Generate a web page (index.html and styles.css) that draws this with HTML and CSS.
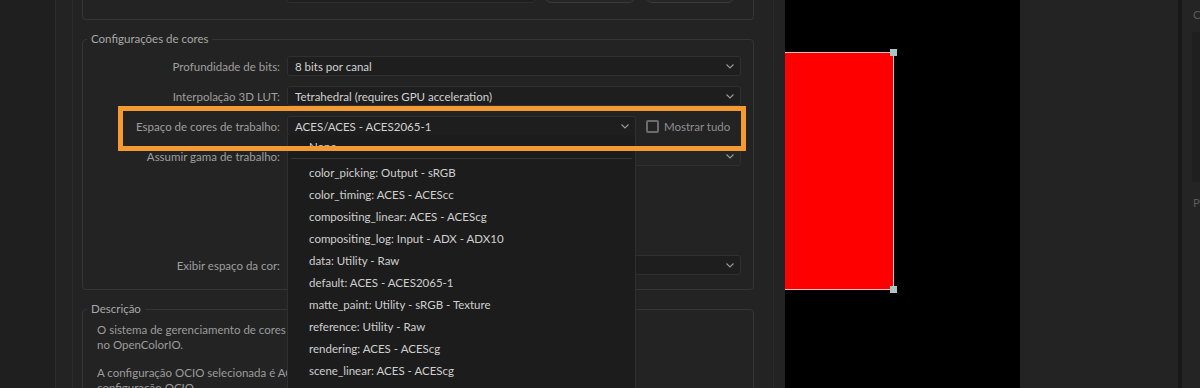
FILE: index.html
```html
<!DOCTYPE html>
<html lang="pt">
<head>
<meta charset="utf-8">
<link rel="stylesheet" href="styles.css">
</head>
<body>
<div class="app">
  <div class="gutter"></div>
  <div class="dialog">
    <div class="pane">
      <div class="top-box">
        <div class="top-row">
          <span class="label top-label">Configuração personalizada:</span>
          <span class="field top-field"></span>
          <span class="btn">Carregar</span>
          <span class="btn">Configuração</span>
        </div>
      </div>

      <fieldset class="group">
        <legend>Configurações de cores</legend>
        <div class="form">
          <span class="label">Profundidade de bits:</span>
          <div class="select"><span>8 bits por canal</span><svg class="chev" viewBox="0 0 8 5"><path d="M0.5 0.5 L4 4 L7.5 0.5"/></svg></div>

          <span class="label">Interpolação 3D LUT:</span>
          <div class="select"><span>Tetrahedral (requires GPU acceleration)</span><svg class="chev" viewBox="0 0 8 5"><path d="M0.5 0.5 L4 4 L7.5 0.5"/></svg></div>

          <span class="label">Espaço de cores de trabalho:</span>
          <div class="field-wrap">
            <div class="select"><span>ACES/ACES - ACES2065-1</span><svg class="chev" viewBox="0 0 8 5"><path d="M0.5 0.5 L4 4 L7.5 0.5"/></svg></div>
            <label class="check"><span class="box"></span>Mostrar tudo</label>
          </div>

          <span class="label">Assumir gama de trabalho:</span>
          <div class="select disabled"><span></span><svg class="chev" viewBox="0 0 8 5"><path d="M0.5 0.5 L4 4 L7.5 0.5"/></svg></div>

          <span class="label spaced">Exibir espaço da cor:</span>
          <div class="select spaced"><span></span><svg class="chev" viewBox="0 0 8 5"><path d="M0.5 0.5 L4 4 L7.5 0.5"/></svg></div>
        </div>
      </fieldset>

      <fieldset class="group desc">
        <legend>Descrição</legend>
        <p>O sistema de gerenciamento de cores OCIO é baseado<br>no OpenColorIO.</p>
        <p>A configuração OCIO selecionada é ACES 1.2. Para mais<br>configuração OCIO.</p>
      </fieldset>
    </div>
  </div>

  <div class="canvas">
    <div class="layer">
      <span class="handle h-top"></span>
      <span class="handle h-bottom"></span>
    </div>
  </div>
  <div class="panel"></div>
  <div class="divider"></div>
  <div class="panel2">
    <span class="p2-letter">C</span>
    <div class="p2-box"></div>
    <span class="p2-letter">P</span>
  </div>

  <div class="dropdown">
    <div class="dd-item dd-none">None</div>
    <div class="dd-sep"></div>
    <div class="dd-item">color_picking: Output - sRGB</div>
    <div class="dd-item">color_timing: ACES - ACEScc</div>
    <div class="dd-item">compositing_linear: ACES - ACEScg</div>
    <div class="dd-item">compositing_log: Input - ADX - ADX10</div>
    <div class="dd-item">data: Utility - Raw</div>
    <div class="dd-item">default: ACES - ACES2065-1</div>
    <div class="dd-item">matte_paint: Utility - sRGB - Texture</div>
    <div class="dd-item">reference: Utility - Raw</div>
    <div class="dd-item">rendering: ACES - ACEScg</div>
    <div class="dd-item">scene_linear: ACES - ACEScg</div>
  </div>

  <div class="highlight"></div>
</div>
</body>
</html>
```

FILE: styles.css
```css
* { box-sizing: border-box; }

html, body {
  margin: 0;
  padding: 0;
  background: #1e1e1e;
}

body {
  width: 1200px;
  height: 388px;
  overflow: hidden;
  font-family: "Lato", "Liberation Sans", sans-serif;
  font-size: 11.5px;
  color: #a6a6a6;
}

.app {
  position: relative;
  display: flex;
  width: 1200px;
  height: 388px;
  overflow: hidden;
}

.gutter {
  width: 55px;
  flex: none;
  background: #1f1f1f;
}

.dialog {
  width: 730px;
  flex: none;
  background: #232323;
  border-left: 1px solid #2d2d2d;
  padding-left: 16px;
  padding-right: 11px;
}

.pane {
  height: 100%;
  border-left: 1px solid #2b2b2b;
  border-right: 1px solid #2b2b2b;
  padding-left: 9px;
  padding-right: 19px;
}

/* top group box, mostly scrolled off */
.top-box {
  display: flow-root;
  height: 20px;
  border: 1px solid #353535;
  border-top: none;
  border-radius: 0 0 4px 4px;
}

.top-row {
  display: flex;
  align-items: center;
  margin-top: -17px;
  height: 20px;
}

.top-label {
  width: 197px;
  text-align: right;
  margin-top: -12px;
}

.top-field {
  margin-left: 7px;
  width: 248px;
  height: 20px;
  background: #1e1e1e;
  border: 1px solid #2f2f2f;
  border-radius: 3px;
}

.btn {
  height: 20px;
  width: 90px;
  margin-left: 10px;
  border: 1px solid #3a3a3a;
  border-radius: 6px;
  background: #262626;
  color: #a6a6a6;
  text-align: center;
  line-height: 6px;
}

.btn + .btn { margin-left: 11px; width: 88px; }

/* groups */
.group {
  margin: 12px 0 0 0;
  padding: 0 12px 14px 0;
  border: 1px solid #353535;
  border-radius: 4px;
  min-width: 0;
}

.group legend {
  margin-left: 4px;
  padding: 0 4px;
  line-height: 14px;
  color: #a8a8a8;
  font-size: 11.5px;
}

.form {
  display: grid;
  grid-template-columns: 197px 1fr;
  column-gap: 7px;
  row-gap: 10px;
  padding-top: 10px;
  align-items: center;
}

.label {
  text-align: right;
  color: #9f9f9f;
  white-space: nowrap;
}

.spaced { margin-top: 79px; }

.select {
  display: flex;
  align-items: center;
  height: 20px;
  background: #1e1e1e;
  border: 1px solid #303030;
  border-radius: 3px;
  padding: 0 6px 0 7px;
  color: #d2d2d2;
}

.select span {
  flex: 1;
  white-space: nowrap;
}

.select.disabled { background: #252525; }

.chev {
  width: 8px;
  height: 5px;
  fill: none;
  stroke: #9a9a9a;
  stroke-width: 1.1;
}

.field-wrap {
  display: flex;
  align-items: center;
  gap: 10px;
}

.field-wrap .select { flex: 1; }

.check {
  display: flex;
  align-items: center;
  gap: 5px;
  width: 95px;
  color: #8f8f8f;
}

.check .box {
  width: 13px;
  height: 13px;
  border: 2px solid #6c6c6c;
  border-radius: 2px;
}

.desc { padding: 6px 12px 14px 14px; }

.desc legend { margin-left: -10px; }

.desc p {
  margin: 0 0 13px 0;
  line-height: 15px;
  color: #9c9c9c;
}

/* canvas */
.canvas {
  width: 235px;
  flex: none;
  background: #000;
  padding-top: 52px;
}

.layer {
  position: relative;
  width: 109px;
  height: 238px;
  background: #ff0000;
  border-top: 1px solid #f0bcbc;
  border-right: 1px solid #f0bcbc;
  border-bottom: 1px solid #f0bcbc;
}

.handle {
  position: absolute;
  right: -4px;
  width: 7px;
  height: 7px;
  background: #a9c6c6;
}

.h-top { top: -4px; }
.h-bottom { bottom: -4px; }

.panel {
  width: 158px;
  flex: none;
  background: #232323;
}

.divider {
  width: 4px;
  flex: none;
  background: #181818;
}

.panel2 {
  flex: 1;
  background: #242424;
  padding: 8px 0 0 11px;
  display: flex;
  flex-direction: column;
  color: #5a5a5a;
}

.p2-letter { line-height: 14px; }

.p2-box {
  height: 150px;
  margin: 10px 0 14px -1px;
  background: #1f1f1f;
}

/* open dropdown list */
.dropdown {
  position: absolute;
  left: 287px;
  top: 135px;
  width: 349px;
  height: 260px;
  background: #1c1c1c;
  border: 1px solid #2f2f2f;
  border-top: none;
  padding-top: 2px;
}

.dd-item {
  height: 22px;
  line-height: 22px;
  padding-left: 21px;
  color: #cfcfcf;
  white-space: nowrap;
}

.dd-sep {
  height: 1px;
  margin: 0 3px 3px 3px;
  background: #363636;
}

.dd-none { height: 21px; line-height: 20px; }

/* overlay annotation, drawn above the open list */
.highlight {
  position: absolute;
  left: 118px;
  top: 106px;
  width: 628px;
  height: 45px;
  border: 5px solid #f39b32;
}
```
